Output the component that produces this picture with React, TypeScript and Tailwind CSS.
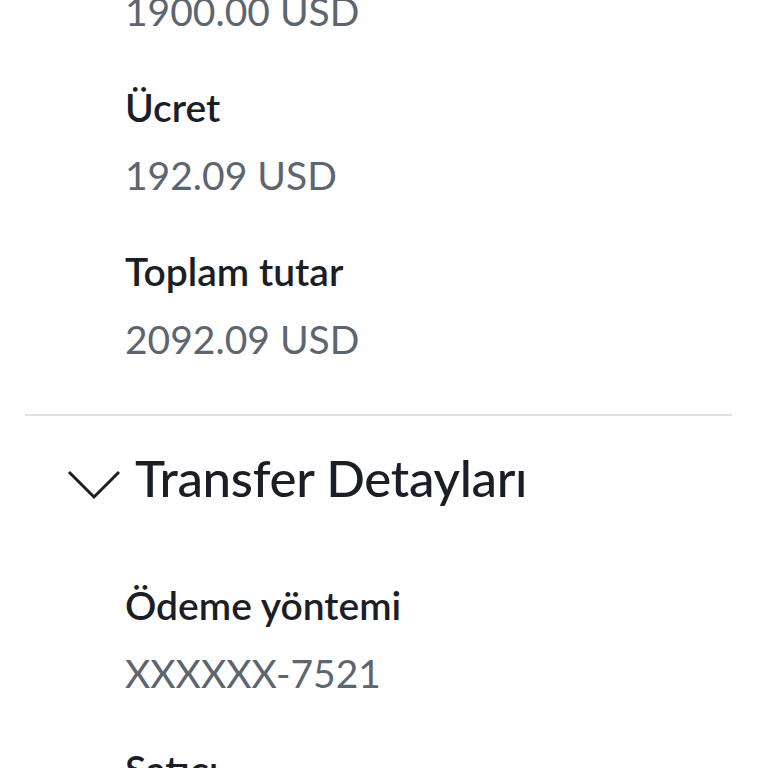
const summary = [
  { label: 'Ücret', value: '192.09 USD' },
  { label: 'Toplam tutar', value: '2092.09 USD' },
]

const transfer = [
  { label: 'Ödeme yöntemi', value: 'XXXXXX-7521' },
  { label: 'Satıcı', value: 'Global Trade Ltd.' },
]

function Field({ label, value }: { label: string; value: string }) {
  return (
    <div className="flex flex-col">
      <div className="text-[39px] leading-[48px] font-semibold text-[#1b1e26]">{label}</div>
      <div className="mt-[20px] text-[39px] leading-[48px] text-[#5d6570]">{value}</div>
    </div>
  )
}

export default function App() {
  return (
    <div className="h-[768px] w-[768px] overflow-hidden bg-white" style={{ fontFamily: 'Lato, "Noto Sans", sans-serif' }}>
      <div className="-mt-[13px] px-[25px]">
        <div className="pl-[100px] text-[39px] leading-[48px] text-[#5d6570]">1900.00 USD</div>
        <div className="mt-[48px] flex flex-col gap-[48px] pl-[100px]">
          {summary.map((f) => (
            <Field key={f.label} {...f} />
          ))}
        </div>
        <div className="mt-[51px] h-[2px] w-[707px] bg-[#e1e1e1]" />
        <div className="mt-[30px] flex items-center gap-[14px] pl-[42px]">
          <svg width="54" height="30" viewBox="0 0 54 30" fill="none" className="mt-[14px]">
            <path d="M2 2 L27 27 L52 2" stroke="#1b1e26" strokeWidth="3" />
          </svg>
          <span className="text-[51px] leading-[64px] font-medium tracking-[-0.3px] text-[#1b1e26]">Transfer Detayları</span>
        </div>
        <div className="mt-[71px] flex flex-col gap-[48px] pl-[100px]">
          {transfer.map((f) => (
            <Field key={f.label} {...f} />
          ))}
        </div>
      </div>
    </div>
  )
}
